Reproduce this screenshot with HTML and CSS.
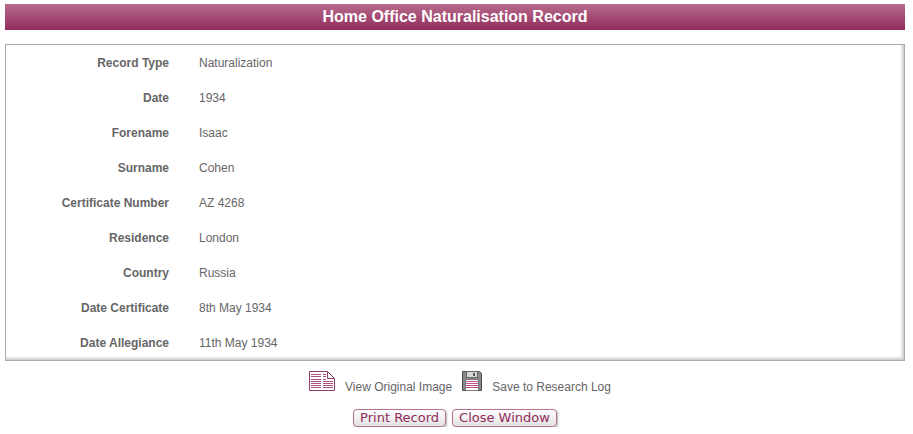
FILE: index.html
```html
<!DOCTYPE html>
<html lang="en">
<head>
    <meta charset="UTF-8">
    <meta name="viewport" content="width=device-width, initial-scale=1.0">
    <title>Home Office Naturalisation Record</title>
    <link rel="stylesheet" href="styles.css">
</head>
<body>
    <h1 class="title-bar">Home Office Naturalisation Record</h1>

    <div class="record-box">
        <table class="record">
            <tr><th scope="row">Record Type</th><td>Naturalization</td></tr>
            <tr><th scope="row">Date</th><td>1934</td></tr>
            <tr><th scope="row">Forename</th><td>Isaac</td></tr>
            <tr><th scope="row">Surname</th><td>Cohen</td></tr>
            <tr><th scope="row">Certificate Number</th><td>AZ 4268</td></tr>
            <tr><th scope="row">Residence</th><td>London</td></tr>
            <tr><th scope="row">Country</th><td>Russia</td></tr>
            <tr><th scope="row">Date Certificate</th><td>8th May 1934</td></tr>
            <tr><th scope="row">Date Allegiance</th><td>11th May 1934</td></tr>
        </table>
    </div>

    <div class="links">
        <a href="#image">
            <svg width="26" height="20" viewBox="0 0 26 20" fill="none" stroke="#8f4068" aria-hidden="true">
                <path fill="#fff" d="M.5 .5H18.5L25.5 7.5V19.5H.5Z"/>
                <path d="M18.5 .5V7.5H25.5"/>
                <path stroke="#a8557f" d="M2 3.5H12M2 5.5H12M2 8.5H12M2 10.5H12M2 12.5H12M2 14.5H12M2 16.5H12M14 3.5H17M14 5.5H17M14 8.5H17M14 10.5H24M14 12.5H24M14 14.5H24M14 16.5H24"/>
            </svg>
            <span>View Original Image</span>
        </a>
        <a href="#log">
            <svg width="20" height="20" viewBox="0 0 20 20" aria-hidden="true">
                <path fill="#8a8a8a" stroke="#4c4c4c" d="M.5 .5H17.5L19.5 2.5V19.5H.5Z"/>
                <path fill="#d8d8d8" stroke="#666" d="M4.5 .5H15.5V6.5H4.5Z"/>
                <path fill="#555" d="M11 2H13V5H11Z"/>
                <path fill="#fff" stroke="#777" d="M3.5 8.5H16.5V19.5H3.5Z"/>
                <path stroke="#c2508c" d="M4 10.5H16M4 12.5H16M4 14.5H16M4 16.5H16"/>
            </svg>
            <span>Save to Research Log</span>
        </a>
    </div>

    <div class="buttons">
        <button type="button" onclick="window.print()">Print Record</button>
        <button type="button" onclick="window.close()">Close Window</button>
    </div>
</body>
</html>
```

FILE: styles.css
```css
body {
    margin: 4px 8px 0 5px;
    background-color: #fff;
    color: #666;
    font-family: Arial, "Liberation Sans", sans-serif;
    font-size: 12px;
}
.title-bar {
    margin: 0 0 14px;
    background: linear-gradient(#b76b8b, #922c5d);
    color: #fff;
    font-size: 16px;
    line-height: 26px;
    text-align: center;
}
.record-box {
    border: 1px solid #aaa;
    box-shadow: inset -2px -2px 3px rgba(0, 0, 0, 0.2);
}
.record {
    width: 100%;
    border-collapse: collapse;
}
.record th, .record td {
    height: 35px;
    padding: 0;
    text-align: left;
}
.record th {
    width: 163px;
    padding-right: 30px;
    text-align: right;
}
.links {
    display: flex;
    justify-content: center;
    margin-top: 10px;
}
.links a {
    display: flex;
    align-items: flex-end;
    color: #666;
    line-height: 14px;
    text-decoration: none;
}
.links svg {
    margin: 0 10px 3px;
}
.buttons {
    display: flex;
    justify-content: center;
    gap: 6px;
    margin-top: 15px;
}
.buttons button {
    height: 18px;
    padding: 0 6px;
    border: 1px solid #b5708f;
    border-radius: 4px;
    background: linear-gradient(#fff, #e2e2e2);
    box-shadow: 1px 1px 2px rgba(0, 0, 0, 0.3);
    color: #922c5d;
    font-family: Verdana, "DejaVu Sans", sans-serif;
    font-size: 13px;
    line-height: 16px;
    cursor: pointer;
}
```
